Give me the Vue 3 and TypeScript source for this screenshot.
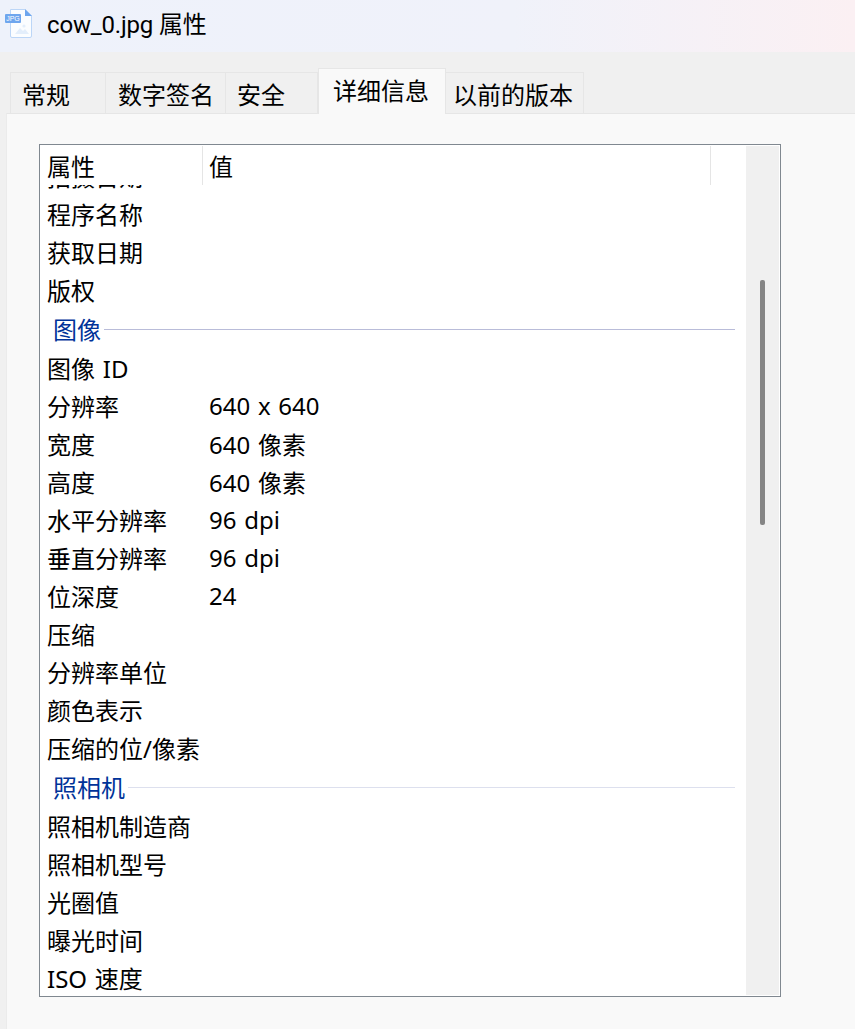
<script setup lang="ts">
type Row = { type: 'row'; name: string; value?: string } | { type: 'group'; name: string; soft?: boolean }

const tabs = [
  { label: '常规', width: 96, inset: 11 },
  { label: '数字签名', width: 120, inset: 12 },
  { label: '安全', width: 92, inset: 11 },
  { label: '详细信息', width: 128, inset: 14, active: true },
  { label: '以前的版本', width: 138, inset: 7 },
]

const rows: Row[] = [
  { type: 'row', name: '拍摄日期' },
  { type: 'row', name: '程序名称' },
  { type: 'row', name: '获取日期' },
  { type: 'row', name: '版权' },
  { type: 'group', name: '图像' },
  { type: 'row', name: '图像 ID' },
  { type: 'row', name: '分辨率', value: '640 x 640' },
  { type: 'row', name: '宽度', value: '640 像素' },
  { type: 'row', name: '高度', value: '640 像素' },
  { type: 'row', name: '水平分辨率', value: '96 dpi' },
  { type: 'row', name: '垂直分辨率', value: '96 dpi' },
  { type: 'row', name: '位深度', value: '24' },
  { type: 'row', name: '压缩' },
  { type: 'row', name: '分辨率单位' },
  { type: 'row', name: '颜色表示' },
  { type: 'row', name: '压缩的位/像素' },
  { type: 'group', name: '照相机', soft: true },
  { type: 'row', name: '照相机制造商' },
  { type: 'row', name: '照相机型号' },
  { type: 'row', name: '光圈值' },
  { type: 'row', name: '曝光时间' },
  { type: 'row', name: 'ISO 速度' },
]
</script>

<template>
  <div class="window">
    <header class="titlebar">
      <svg class="file-icon" width="34" height="40" viewBox="0 0 34 40" aria-hidden="true">
        <path d="M10.5 9.5H25L31.5 16V36a1.5 1.5 0 0 1-1.5 1.5H12A1.5 1.5 0 0 1 10.5 36Z" fill="#fbfdff" stroke="#bcd6f7" />
        <path d="M25 9l7 7h-7Z" fill="#6ea6ee" />
        <path d="M15 34l5-6 3 3 2-2 4 5Z" fill="#e3eefb" />
        <circle cx="24" cy="26" r="1.6" fill="#e3eefb" />
        <rect x="5" y="14" width="16" height="9" rx="1" fill="#6ea6ee" />
        <text x="13" y="21.3" text-anchor="middle" class="badge">JPG</text>
      </svg>
      <span class="title">cow_0.jpg 属性</span>
    </header>

    <nav class="tabs">
      <div
        v-for="tab in tabs"
        :key="tab.label"
        class="tab"
        :class="{ active: tab.active }"
        :style="{ width: tab.width + 'px', paddingLeft: tab.inset + 'px' }"
      >{{ tab.label }}</div>
    </nav>

    <main class="panel">
      <section class="listbox">
        <div class="list">
          <div class="head">
            <div class="head-name">属性</div>
            <div class="head-value">值</div>
            <div class="head-rest"></div>
          </div>
          <div class="viewport">
            <div class="rows">
              <template v-for="row in rows" :key="row.name">
                <div v-if="row.type === 'group'" class="group" :class="{ soft: row.soft }">
                  <span class="group-name">{{ row.name }}</span>
                  <span class="group-line"></span>
                </div>
                <div v-else class="row">
                  <span class="name">{{ row.name }}</span>
                  <span class="value">{{ row.value }}</span>
                </div>
              </template>
            </div>
          </div>
        </div>
        <aside class="scrollbar"><div class="thumb"></div></aside>
      </section>
    </main>
  </div>
</template>

<style>
html, body { margin: 0; background: #f9f9f9; }
</style>

<style scoped>
.window {
  width: 855px;
  height: 1029px;
  display: flex;
  flex-direction: column;
  overflow: hidden;
  background: #f0f0f0;
  color: #000;
  font-family: "Noto Sans", "Noto Sans CJK SC", sans-serif;
  font-size: 24px;
}
.titlebar {
  height: 52px;
  flex: none;
  display: flex;
  align-items: flex-start;
  box-sizing: border-box;
  background: linear-gradient(90deg, #eef2fb 0%, #f0f2fa 60%, #fbf0f3 100%);
}
.file-icon { flex: none; margin-right: 13px; }
.badge { font-size: 7px; fill: #fff; font-family: "Liberation Sans", sans-serif; }
.title {
  line-height: 50px;
  letter-spacing: -0.17px;
  font-family: Roboto, "Noto Sans CJK SC", sans-serif;
}
.tabs {
  height: 61px;
  flex: none;
  display: flex;
  align-items: flex-end;
  box-sizing: border-box;
  padding-left: 10px;
  position: relative;
  z-index: 1;
}
.tab {
  height: 41px;
  box-sizing: border-box;
  border-top: 1px solid #e6e6e6;
  border-right: 1px solid #e6e6e6;
  line-height: 43px;
  background: #f0f0f0;
  white-space: nowrap;
}
.tab:first-child { border-left: 1px solid #e6e6e6; }
.tab.active {
  height: 46px;
  margin-bottom: -1px;
  background: #f9f9f9;
  line-height: 43px;
  border-left: 1px solid #e6e6e6;
}
.panel {
  flex: 1;
  margin-left: 6px;
  background: #f9f9f9;
  border-top: 1px solid #e6e6e6;
  border-left: 1px solid #ebebeb;
  padding: 30px 0 0 32px;
  box-sizing: border-box;
  min-height: 0;
}
.listbox {
  width: 742px;
  height: 853px;
  box-sizing: border-box;
  border: 1px solid #808890;
  background: #fff;
  display: flex;
  padding: 1px 1px 1px 0;
}
.list {
  width: 706px;
  flex: none;
  display: flex;
  flex-direction: column;
  min-height: 0;
}
.head {
  height: 39px;
  flex: none;
  display: flex;
  line-height: 42px;
}
.head-name {
  width: 163px;
  flex: none;
  box-sizing: border-box;
  padding-left: 7px;
  border-right: 1px solid #e5e5e5;
}
.head-value {
  width: 508px;
  flex: none;
  padding-left: 6px;
  box-sizing: border-box;
  border-right: 1px solid #e5e5e5;
}
.viewport { flex: 1; overflow: hidden; min-height: 0; }
.rows { margin-top: -27px; }
.row {
  height: 38px;
  box-sizing: border-box;
  padding-bottom: 3px;
  display: flex;
  align-items: center;
  white-space: nowrap;
  word-spacing: 1.5px;
}
.name { width: 162px; flex: none; padding-left: 7px; }
.group {
  height: 40px;
  box-sizing: border-box;
  padding: 0 11px 3px 13px;
  display: flex;
  align-items: center;
  color: #003399;
}
.group-name { flex: none; margin-right: 3px; }
.group-line { flex: 1; height: 1px; background: #b9bcd9; margin-top: 1px; }
.group.soft .group-line { background: #dde0ee; }
.scrollbar {
  width: 33px;
  flex: none;
  background: #f0f0f0;
  display: flex;
  justify-content: center;
}
.thumb {
  width: 5px;
  height: 245px;
  margin-top: 134px;
  background: #858585;
  border-radius: 2px;
}
</style>
